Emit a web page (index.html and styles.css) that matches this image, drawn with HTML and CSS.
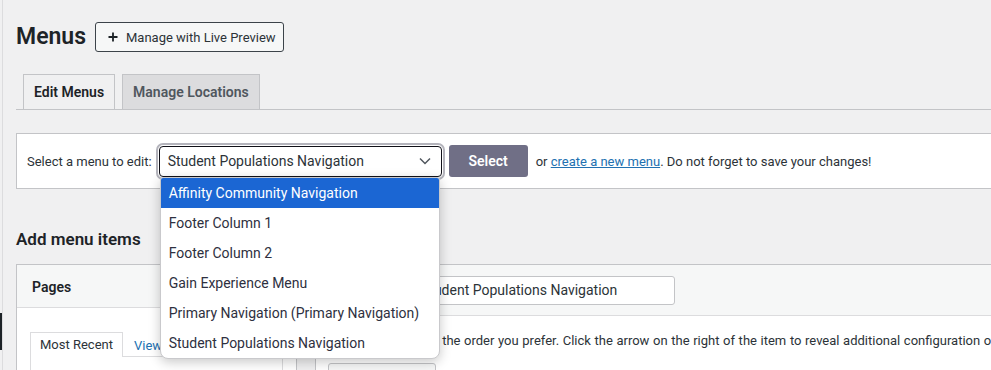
FILE: index.html
```html
<!DOCTYPE html>
<html lang="en">
<head>
<meta charset="utf-8">
<title>Menus</title>
<link rel="stylesheet" href="styles.css">
</head>
<body>
<div class="admin-edge"></div>
<div class="frame">
  <div class="title-row">
    <h1 class="title">Menus</h1>
    <a class="preview-btn"><svg class="plus" width="10" height="10" viewBox="0 0 10 10"><path d="M5 0.5v9M0.5 5h9" stroke="#1d2327" stroke-width="1.8" fill="none"/></svg>Manage with Live Preview</a>
  </div>

  <nav class="tabs">
    <a class="tab tab-active">Edit Menus</a>
    <a class="tab tab-inactive">Manage Locations</a>
  </nav>

  <div class="manage-box">
    <span class="manage-label">Select a menu to edit:</span>
    <div class="select-wrap">
      <div class="select">
        <span class="select-value">Student Populations Navigation</span>
        <svg class="chevron" width="12" height="8" viewBox="0 0 12 8"><path d="M1 1.5l5 5 5-5" stroke="#50575e" stroke-width="1.5" fill="none"/></svg>
      </div>
      <ul class="dropdown">
        <li class="opt opt-active">Affinity Community Navigation</li>
        <li class="opt">Footer Column 1</li>
        <li class="opt">Footer Column 2</li>
        <li class="opt">Gain Experience Menu</li>
        <li class="opt">Primary Navigation (Primary Navigation)</li>
        <li class="opt">Student Populations Navigation</li>
      </ul>
    </div>
    <button class="select-btn">Select</button>
    <span class="manage-note">or <a class="link">create a new menu</a>. Do not forget to save your changes!</span>
  </div>

  <h2 class="section-title">Add menu items</h2>

  <div class="columns">
    <div class="side-col">
      <div class="accordion">
        <div class="acc-head">Pages</div>
        <div class="acc-body">
          <div class="inner-tabs">
            <span class="itab">Most Recent</span>
            <a class="itab-link">View All</a>
            <a class="itab-link">Search</a>
          </div>
          <div class="inner-panel"></div>
        </div>
      </div>
    </div>
    <div class="main-col">
      <div class="menu-head">
        <label class="menu-name-label">Menu Name</label>
        <div class="menu-name-input">Student Populations Navigation</div>
      </div>
      <div class="menu-body">
        <p class="menu-hint">Drag the items into the order you prefer. Click the arrow on the right of the item to reveal additional configuration options.</p>
        <div class="bulk">
          <span class="bulk-box"></span>
          <span class="bulk-text">Bulk Select</span>
        </div>
      </div>
    </div>
  </div>
</div>
</body>
</html>
```

FILE: styles.css
```css
html, body {
  margin: 0;
  padding: 0;
}
body {
  background: #f0f0f1;
  font-family: Roboto, "Liberation Sans", sans-serif;
  font-size: 13px;
  color: #3c434a;
  overflow: hidden;
  width: 991px;
  height: 370px;
  position: relative;
}
.admin-edge {
  position: absolute;
  left: 0;
  top: 313px;
  width: 2px;
  height: 37px;
  background: #1d2327;
}
.frame {
  margin-left: 2px;
  border-left: 1px solid #dcdcde;
  padding: 22px 0 0 13px;
  width: 1200px;
  min-height: 400px;
}
.title-row {
  display: flex;
  align-items: center;
  height: 30px;
}
.title {
  margin: 0;
  font-size: 23px;
  line-height: 30px;
  font-weight: 600;
  color: #1d2327;
}
.preview-btn {
  margin-left: 9px;
  display: flex;
  align-items: center;
  box-sizing: border-box;
  height: 30px;
  width: 189px;
  padding: 0 0 0 12px;
  border: 1px solid #3c434a;
  border-radius: 3px;
  background: #f6f7f7;
  color: #2c3338;
  font-size: 13px;
}
.plus {
  margin-right: 8px;
}
.tabs {
  margin-top: 22px;
  display: flex;
  padding-left: 7px;
  border-bottom: 1px solid #c3c4c7;
}
.tab {
  font-size: 14px;
  line-height: 24px;
  font-weight: 600;
  padding: 5px 10px;
  border: 1px solid #c3c4c7;
  border-bottom: 0;
  margin-right: 7px;
}
.tab-active {
  background: #f0f0f1;
  color: #1d2327;
}
.tab-inactive {
  background: #dcdcde;
  color: #50575e;
}
.manage-box {
  margin-top: 23px;
  height: 54px;
  border: 1px solid #c3c4c7;
  background: #fff;
  display: flex;
  align-items: center;
  padding: 0 10px;
}
.manage-label {
  color: #2c3338;
  margin-right: 7px;
}
.select-wrap {
  position: relative;
}
.select {
  box-sizing: border-box;
  width: 283px;
  height: 31px;
  border: 1px solid #101018;
  border-radius: 4px;
  background: #fff;
  box-shadow: 0 0 0 1px #fff, 0 0 0 3px #b4b4bc;
  display: flex;
  align-items: center;
  justify-content: space-between;
  padding: 0 8px 0 8px;
  font-size: 14px;
  color: #2c3338;
}
.chevron {
  margin-right: 2px;
}
.dropdown {
  position: absolute;
  left: 1px;
  top: 100%;
  width: 278px;
  margin: 0;
  padding: 0;
  list-style: none;
  background: #fff;
  border: 1px solid #c9c9cc;
  border-radius: 3px 3px 8px 8px;
  box-shadow: 0 3px 12px rgba(0, 0, 0, 0.22);
  z-index: 5;
  overflow: hidden;
}
.opt {
  height: 30px;
  line-height: 30px;
  padding-left: 8px;
  font-size: 14px;
  color: #2e3040;
  white-space: nowrap;
}
.opt-active {
  background: #1b66d3;
  color: #fff;
}
.select-btn {
  margin-left: 7px;
  width: 79px;
  height: 32px;
  border: 0;
  border-radius: 3px;
  background: #706f86;
  color: #fff;
  font-family: inherit;
  font-size: 14px;
  font-weight: 600;
  padding: 0;
}
.manage-note {
  margin-left: 8px;
  color: #2c3338;
}
.link {
  color: #2271b1;
  text-decoration: underline;
}
.section-title {
  margin: 38px 0 0;
  font-size: 17px;
  line-height: 24px;
  font-weight: 600;
  color: #1d2327;
}
.columns {
  margin-top: 13px;
  display: flex;
  align-items: flex-start;
}
.side-col {
  width: 281px;
  flex: none;
}
.accordion {
  border: 1px solid #c3c4c7;
  background: #fff;
}
.acc-head {
  height: 42px;
  line-height: 44px;
  padding-left: 15px;
  background: #f6f7f7;
  border-bottom: 1px solid #dcdcde;
  font-size: 14px;
  font-weight: 600;
  color: #1d2327;
}
.acc-body {
  padding: 24px 13px 0;
}
.inner-tabs {
  display: flex;
  align-items: flex-end;
}
.itab {
  line-height: 18px;
  padding: 3px 9px;
  border: 1px solid #dcdcde;
  border-bottom: 0;
  background: #fff;
  color: #2c3338;
  margin-bottom: -1px;
  position: relative;
}
.itab-link {
  color: #2271b1;
  margin-left: 11px;
  padding-bottom: 3px;
}
.inner-panel {
  height: 60px;
  border: 1px solid #dcdcde;
}
.main-col {
  margin-left: 18px;
  flex: 1;
  border: 1px solid #c3c4c7;
  background: #fff;
}
.menu-head {
  height: 50px;
  background: #f6f7f7;
  border-bottom: 1px solid #dcdcde;
  display: flex;
  align-items: center;
  padding-left: 11px;
}
.menu-name-label {
  width: 85px;
  font-weight: 600;
  color: #1d2327;
}
.menu-name-input {
  box-sizing: border-box;
  width: 263px;
  height: 29px;
  line-height: 27px;
  border: 1px solid #c3c4c7;
  border-radius: 3px;
  background: #fff;
  padding-left: 8px;
  font-size: 14px;
  color: #2c3338;
}
.menu-body {
  padding: 15px 11px 0 12px;
}
.menu-hint {
  margin: 0;
  line-height: 20px;
  color: #2c3338;
  white-space: nowrap;
  word-spacing: 0.4px;
}
.bulk {
  margin-top: 12px;
  box-sizing: border-box;
  width: 108px;
  height: 30px;
  border: 1px solid #c3c4c7;
  border-radius: 3px;
  background: #f6f7f7;
  display: flex;
  align-items: center;
  padding-left: 12px;
  gap: 6px;
}
.bulk-box {
  width: 14px;
  height: 14px;
  border: 1px solid #8c8f94;
  border-radius: 3px;
  background: #fff;
}
.bulk-text {
  color: #2271b1;
}
```
